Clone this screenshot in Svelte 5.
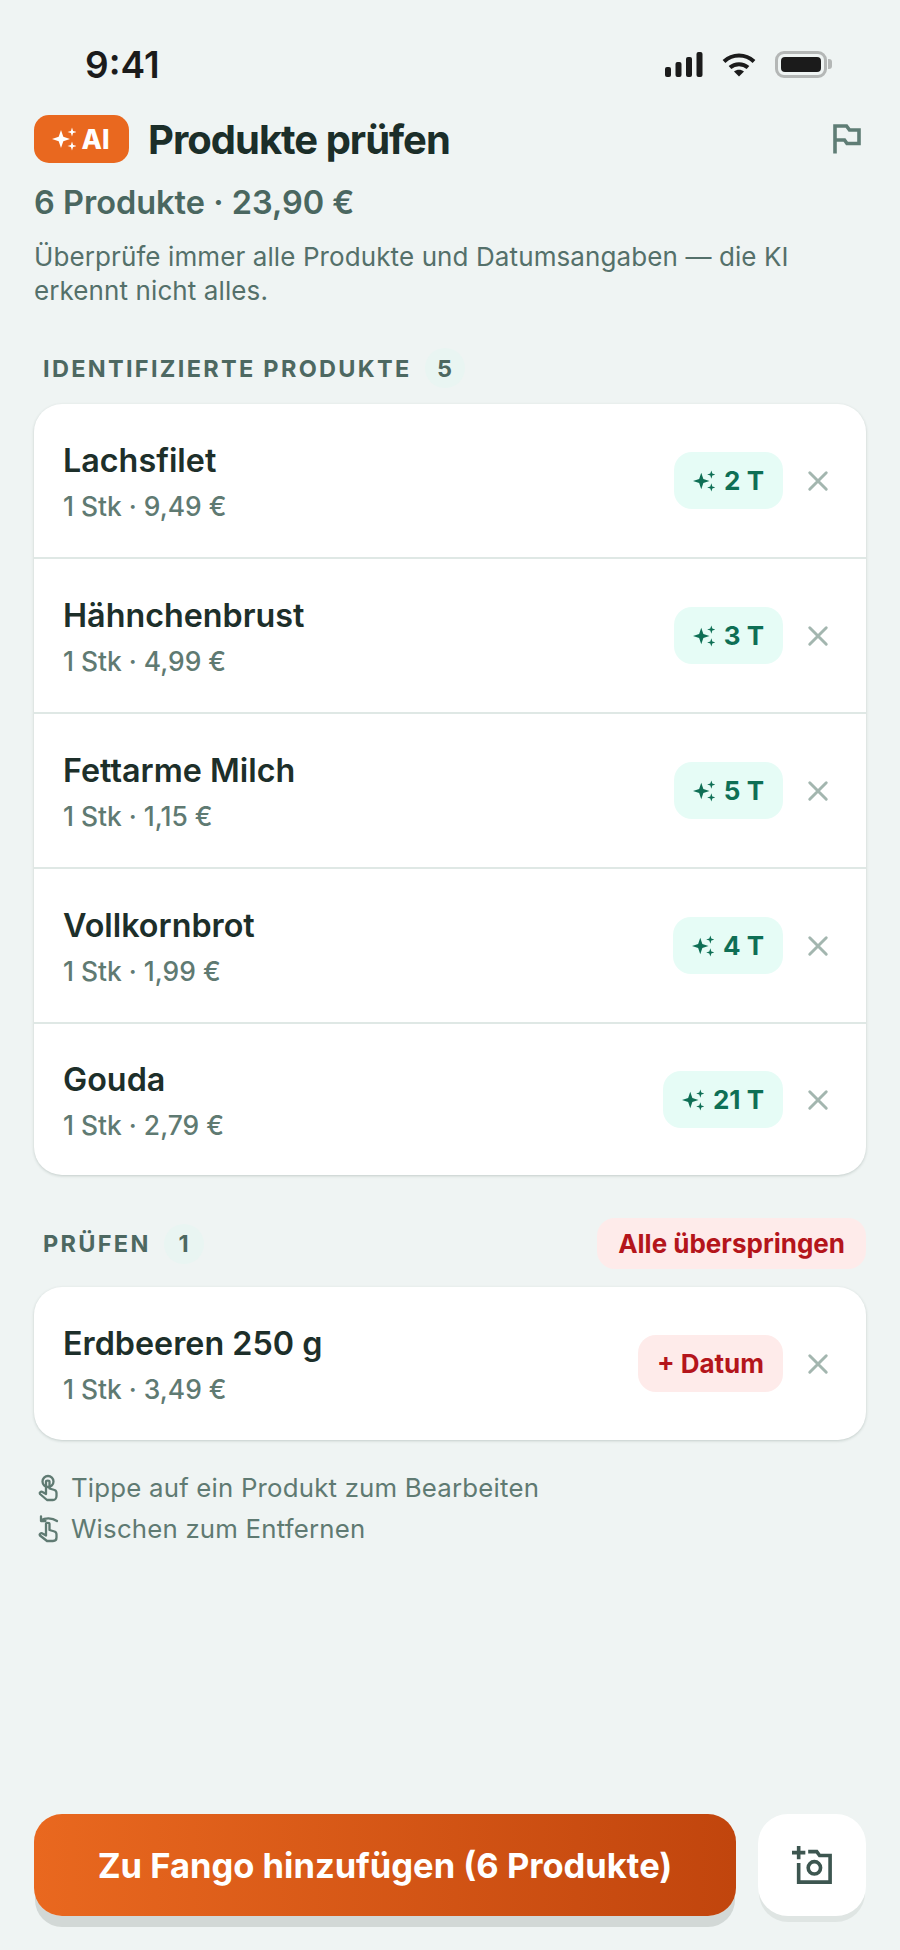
<script lang="ts">
	const identified = [
		{ name: 'Lachsfilet', meta: '1 Stk · 9,49 €', days: '2 T' },
		{ name: 'Hähnchenbrust', meta: '1 Stk · 4,99 €', days: '3 T' },
		{ name: 'Fettarme Milch', meta: '1 Stk · 1,15 €', days: '5 T' },
		{ name: 'Vollkornbrot', meta: '1 Stk · 1,99 €', days: '4 T' },
		{ name: 'Gouda', meta: '1 Stk · 2,79 €', days: '21 T' }
	];
</script>

{#snippet sparkle()}
	<svg class="sparkle" viewBox="0 0 24 24" fill="currentColor" aria-hidden="true">
		<path d="M9 3l2.300 6.700L18 12l-6.700 2.300L9 21l-2.300-6.700L0 12l6.700-2.300z" />
		<path d="M20 .5l1.100 3.400 3.400 1.100-3.400 1.100L20 9.500l-1.100-3.400L15.500 5l3.400-1.100z" />
		<path d="M20 14.500l1.100 3.400 3.400 1.100-3.400 1.100-1.100 3.400-1.100-3.400-3.400-1.100 3.400-1.100z" />
	</svg>
{/snippet}

{#snippet close()}
	<button type="button" class="remove" aria-label="Entfernen">
		<svg viewBox="0 0 24 24" fill="none" stroke="currentColor" stroke-width="3.200" stroke-linecap="round">
			<path d="M3 3l18 18M21 3L3 21" />
		</svg>
	</button>
{/snippet}

<div class="screen">
	<div class="status">
		<span class="time">9:41</span>
		<div class="status-icons">
			<svg class="signal" viewBox="0 0 38 26" fill="#1b1b1b">
				<rect x="0" y="15" width="6" height="10" rx="2" />
				<rect x="10.500" y="10" width="6" height="15" rx="2" />
				<rect x="21" y="5" width="6" height="20" rx="2" />
				<rect x="31.500" y="0" width="6" height="25" rx="2" />
			</svg>
			<svg class="wifi" viewBox="0 0 34 26" fill="none" stroke="#1b1b1b" stroke-width="4">
				<path d="M2 9.500C10.500 1.500 23.500 1.500 32 9.500" />
				<path d="M8 15.500c5-4.500 13-4.500 18 0" />
				<path d="M17 24.500l-5-5c3-2.200 7-2.200 10 0z" fill="#1b1b1b" stroke="none" />
			</svg>
			<div class="battery"><span></span></div>
		</div>
	</div>

	<header>
		<div class="title-row">
			<span class="ai-badge">{@render sparkle()}AI</span>
			<h1>Produkte prüfen</h1>
			<svg class="flag" viewBox="0 0 28 32" fill="none" stroke="currentColor" stroke-width="3.600">
				<path d="M2 30.500V3h11.500l3 4H26v13.500H14l-2.500-3.500H2" />
			</svg>
		</div>
		<p class="summary">6 Produkte · 23,90 €</p>
		<p class="note">Überprüfe immer alle Produkte und Datumsangaben — die KI erkennt nicht alles.</p>
	</header>

	<div class="section-head first">
		<span class="section-label">IDENTIFIZIERTE PRODUKTE</span>
		<span class="count">5</span>
	</div>
	<div class="card">
		{#each identified as item (item.name)}
			<div class="row">
				<div class="info">
					<div class="name">{item.name}</div>
					<div class="meta">{item.meta}</div>
				</div>
				<span class="chip green">{@render sparkle()}{item.days}</span>
				{@render close()}
			</div>
		{/each}
	</div>

	<div class="section-head second">
		<span class="section-label">PRÜFEN</span>
		<span class="count">1</span>
		<button type="button" class="skip">Alle überspringen</button>
	</div>
	<div class="card single">
		<div class="row">
			<div class="info">
				<div class="name">Erdbeeren 250 g</div>
				<div class="meta">1 Stk · 3,49 €</div>
			</div>
			<span class="chip red">+ Datum</span>
			{@render close()}
		</div>
	</div>

	<div class="hints">
		<div class="hint">
			<svg viewBox="0 0 24 28" fill="none" stroke="currentColor" stroke-width="2.300" stroke-linecap="round" stroke-linejoin="round">
				<circle cx="12" cy="7.500" r="5.500" />
				<path d="M10 7.500c0-1.200 3.500-1.200 3.500 0v7l5 1.500c1.500.5 2 1.500 2 3v3c0 2-1.500 4-3.500 4h-6L4 20c-1-1.500 1-3 2.500-2l3.500 2z" />
			</svg>
			Tippe auf ein Produkt zum Bearbeiten
		</div>
		<div class="hint">
			<svg viewBox="0 0 24 28" fill="none" stroke="currentColor" stroke-width="2.300" stroke-linecap="round" stroke-linejoin="round">
				<path d="M5 5.500c4-3 11-3 16 .5M5 1.500v4.500h4.500" />
				<path d="M10 9c0-1.500 3.500-1.500 3.500 0v6l5 1.500c1.500.5 2 1.500 2 3v3c0 2-1.500 3.500-3.500 3.500h-6L4 20.500c-1-1.500 1-3 2.500-2l3.500 2z" />
			</svg>
			Wischen zum Entfernen
		</div>
	</div>

	<div class="actions">
		<button type="button" class="primary">Zu Fango hinzufügen (6 Produkte)</button>
		<button type="button" class="camera" aria-label="Foto hinzufügen">
			<svg viewBox="0 0 42 42" fill="none" stroke="currentColor" stroke-width="3.800">
				<path d="M7 1v14M0 8h14" />
				<path d="M7 19v20h33V11H29l-3-4H17" />
				<circle cx="23.500" cy="24" r="6.500" />
			</svg>
		</button>
	</div>
</div>

<style>
	:global(body) {
		background: #eff4f3;
	}

	.screen {
		box-sizing: border-box;
		width: 900px;
		height: 1950px;
		padding: 0 34px;
		display: flex;
		flex-direction: column;
		font-family: Inter, 'Liberation Sans', sans-serif;
		background: #eff4f3;
		color: #1d2f2a;
	}

	.status {
		height: 115px;
		flex: none;
		display: flex;
		justify-content: space-between;
		align-items: flex-start;
		padding: 46px 0 0 51px;
		box-sizing: border-box;
	}

	.time {
		font-size: 37px;
		line-height: 38px;
		font-weight: 600;
		color: #1b1b1b;
	}

	.status-icons {
		display: flex;
		align-items: center;
		gap: 19px;
		padding: 5px 0 0;
		margin-right: 33px;
	}

	.signal {
		width: 38px;
		height: 26px;
	}

	.wifi {
		width: 34px;
		height: 26px;
	}

	.battery {
		position: relative;
		box-sizing: border-box;
		width: 52px;
		height: 27px;
		margin-right: 6px;
		border: 3px solid #b4b7b6;
		border-radius: 9px;
		padding: 3px;
	}

	.battery span {
		display: block;
		height: 100%;
		background: #1b1b1b;
		border-radius: 4px;
	}

	.battery::after {
		content: '';
		position: absolute;
		right: -8px;
		top: 5px;
		width: 4px;
		height: 10px;
		background: #b4b7b6;
		border-radius: 0 3px 3px 0;
	}

	.title-row {
		display: flex;
		align-items: center;
		gap: 19px;
		height: 48px;
	}

	.ai-badge {
		display: flex;
		align-items: center;
		justify-content: center;
		gap: 6px;
		width: 95px;
		height: 48px;
		background: #e9681f;
		color: #fff;
		border-radius: 15px;
		font-size: 26.500px;
		font-weight: 800;
	}

	.ai-badge .sparkle {
		width: 24px;
		height: 24px;
		margin-left: -2px;
	}

	h1 {
		flex: 1;
		margin: 0;
		font-size: 40px;
		font-weight: 700;
		letter-spacing: -1px;
		color: #1b2e29;
	}

	.flag {
		width: 28px;
		height: 32px;
		margin-right: 5px;
		color: #5f7d75;
	}

	.summary {
		margin: 22px 0 0;
		font-size: 32.500px;
		line-height: 36px;
		font-weight: 600;
		color: #4a6760;
	}

	.note {
		margin: 19px 0 0;
		font-size: 26px;
		line-height: 34px;
		color: #54706a;
		letter-spacing: 0.1px;
	}

	.section-head {
		display: flex;
		align-items: center;
		padding: 0 0 0 9px;
		gap: 13px;
	}

	.section-head.first {
		margin-top: 37px;
		height: 46px;
		margin-bottom: 13px;
	}

	.section-head.second {
		margin-top: 43px;
		height: 51px;
		margin-bottom: 18px;
	}

	.section-label {
		font-size: 23.500px;
		font-weight: 700;
		letter-spacing: 2.300px;
		color: #4d6861;
	}

	.count {
		display: grid;
		place-items: center;
		width: 40px;
		height: 40px;
		border-radius: 50%;
		background: #e9f5f2;
		font-size: 23.500px;
		font-weight: 700;
		color: #4d6861;
	}

	.skip {
		margin-left: auto;
		height: 51px;
		padding: 0 21px;
		border: none;
		border-radius: 18px;
		background: #feebea;
		color: #b4151b;
		font-family: inherit;
		font-size: 26px;
		font-weight: 700;
	}

	.card {
		flex: none;
		background: #fff;
		border-radius: 28px;
		box-shadow: 0 1px 3px rgba(40, 70, 60, 0.22);
		overflow: hidden;
	}

	.row {
		display: flex;
		align-items: center;
		box-sizing: border-box;
		height: 155px;
		padding: 0 37px 0 29px;
		border-bottom: 2px solid #dfe8e5;
	}

	.row:last-child {
		height: 151px;
		border-bottom: none;
	}

	.card.single .row {
		height: 153px;
	}

	.info {
		flex: 1;
		padding-top: 2px;
	}

	.name {
		font-size: 32.300px;
		line-height: 36px;
		font-weight: 600;
		color: #1d2f2a;
	}

	.meta {
		margin-top: 12px;
		font-size: 26.400px;
		line-height: 30px;
		font-weight: 500;
		color: #5f7a72;
	}

	.chip {
		display: flex;
		align-items: center;
		gap: 9px;
		height: 57px;
		padding: 0 19px;
		border-radius: 18px;
		font-size: 26px;
		font-weight: 700;
	}

	.chip.green {
		background: #e6fcf6;
		color: #0e6f55;
	}

	.chip.green .sparkle {
		width: 22px;
		height: 22px;
	}

	.chip.red {
		background: #feebea;
		color: #b4151b;
	}

	.remove {
		display: grid;
		place-items: center;
		width: 22px;
		height: 22px;
		margin-left: 24px;
		padding: 0;
		border: none;
		background: none;
		color: #a3b6af;
	}

	.remove svg {
		width: 22px;
		height: 22px;
	}

	.hints {
		margin-top: 33px;
		display: flex;
		flex-direction: column;
		gap: 11px;
	}

	.hint {
		display: flex;
		align-items: center;
		gap: 11px;
		font-size: 25.800px;
		line-height: 30px;
		letter-spacing: 0.2px;
		color: #5f7a72;
	}

	.hint svg {
		width: 24px;
		height: 28px;
		margin-left: 2px;
	}

	.actions {
		margin-top: auto;
		margin-bottom: 34px;
		display: flex;
		gap: 22px;
	}

	.primary {
		flex: 1;
		height: 102px;
		border: none;
		border-radius: 28px;
		background: linear-gradient(90deg, #e9681f, #c1450d);
		box-shadow: 0 12px 0 -1px #d2d8d6;
		color: #fff;
		font-family: inherit;
		font-size: 34.500px;
		font-weight: 700;
	}

	.camera {
		display: grid;
		place-items: center;
		flex: none;
		width: 108px;
		height: 102px;
		padding: 0;
		border: none;
		border-radius: 30px;
		background: #fff;
		box-shadow: 0 7px 0 -1px #dfe5e3;
		color: #3d5650;
	}

	.camera svg {
		width: 42px;
		height: 40px;
	}
</style>
